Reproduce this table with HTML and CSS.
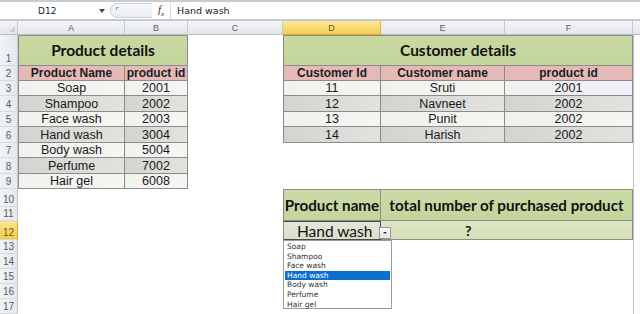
FILE: index.html
```html
<!DOCTYPE html>
<html>
<head>
<meta charset="utf-8">
<link rel="stylesheet" href="styles.css">
</head>
<body>
<div class="app">
  <div class="formula-bar">
    <div class="name-box"><span class="name">D12</span><span class="nb-arrow"></span></div>
    <div class="fb-tools"><span class="pill"><span class="pill-dot"></span></span><span class="fx">f<sub>x</sub></span></div>
    <div class="fb-input">Hand wash</div>
  </div>
  <div class="sheet">
    <div class="corner r0 c0"><span class="corner-tri"></span></div>
    <div class="chd r0 ca">A</div>
    <div class="chd r0 cb">B</div>
    <div class="chd r0 cc">C</div>
    <div class="chd chd-active r0 cd">D</div>
    <div class="chd r0 ce">E</div>
    <div class="chd r0 cf">F</div>
    <div class="chd chd-end r0 cg"></div>

    <div class="rh r1 c0">1</div>
    <div class="rh r2 c0">2</div>
    <div class="rh r3 c0">3</div>
    <div class="rh r4 c0">4</div>
    <div class="rh r5 c0">5</div>
    <div class="rh r6 c0">6</div>
    <div class="rh r7 c0">7</div>
    <div class="rh r8 c0">8</div>
    <div class="rh r9 c0">9</div>
    <div class="rh r10 c0">10</div>
    <div class="rh r11 c0">11</div>
    <div class="rh rh-active r12 c0">12</div>
    <div class="rh r13 c0">13</div>
    <div class="rh r14 c0">14</div>
    <div class="rh r15 c0">15</div>
    <div class="rh r16 c0">16</div>
    <div class="rh r17 c0">17</div>

    <div class="vline r1 cg"></div>

    <!-- Product details -->
    <div class="cell title top left r1 ca-b">Product details</div>
    <div class="cell head left r2 ca">Product Name</div>
    <div class="cell head r2 cb">product id</div>
    <div class="cell light left r3 ca">Soap</div><div class="cell light r3 cb">2001</div>
    <div class="cell dark left r4 ca">Shampoo</div><div class="cell dark r4 cb">2002</div>
    <div class="cell light left r5 ca">Face wash</div><div class="cell light r5 cb">2003</div>
    <div class="cell dark left r6 ca">Hand wash</div><div class="cell dark r6 cb">3004</div>
    <div class="cell light left r7 ca">Body wash</div><div class="cell light r7 cb">5004</div>
    <div class="cell dark left r8 ca">Perfume</div><div class="cell dark r8 cb">7002</div>
    <div class="cell light left r9 ca">Hair gel</div><div class="cell light r9 cb">6008</div>

    <!-- Customer details -->
    <div class="cell title top left r1 cd-f">Customer details</div>
    <div class="cell head left r2 cd">Customer Id</div>
    <div class="cell head r2 ce">Customer name</div>
    <div class="cell head r2 cf">product id</div>
    <div class="cell light left r3 cd">11</div><div class="cell light r3 ce">Sruti</div><div class="cell light lav r3 cf">2001</div>
    <div class="cell dark left r4 cd">12</div><div class="cell dark r4 ce">Navneet</div><div class="cell dark r4 cf">2002</div>
    <div class="cell light left r5 cd">13</div><div class="cell light r5 ce">Punit</div><div class="cell light r5 cf">2002</div>
    <div class="cell dark left r6 cd">14</div><div class="cell dark r6 ce">Harish</div><div class="cell dark r6 cf">2002</div>

    <!-- Lookup -->
    <div class="cell title2 top left r10-11 cd">Product name</div>
    <div class="cell title2 top r10-11 ce-f">total number of purchased product</div>
    <div class="cell sel left r12 cd">Hand wash</div>
    <div class="cell result r12 ce-f">?</div>

    <div class="dd-btn"><span class="dd-tri"></span></div>
    <ul class="dd-list">
      <li>Soap</li>
      <li>Shampoo</li>
      <li>Face wash</li>
      <li class="picked">Hand wash</li>
      <li>Body wash</li>
      <li>Perfume</li>
      <li>Hair gel</li>
    </ul>
  </div>
</div>
</body>
</html>
```
FILE: styles.css
```css
* { box-sizing: border-box; }
html, body { margin: 0; padding: 0; background: #fff; }
body { width: 640px; height: 314px; overflow: hidden; font-family: "Liberation Sans", Arial, sans-serif; }
.app { width: 640px; height: 314px; display: flex; flex-direction: column; }

/* formula bar */
.formula-bar {
  height: 21px; display: flex; align-items: stretch;
  border-top: 2px solid #c9cbce; border-bottom: 2px solid #c6c9cd;
  background: #fff;
}
.name-box { width: 108px; display: flex; align-items: center; position: relative; }
.name { margin-left: 38px; font-family: "DejaVu Sans", sans-serif; font-size: 9px; color: #222; }
.nb-arrow {
  position: absolute; left: 99px; top: 7px;
  border-left: 3px solid transparent; border-right: 3px solid transparent; border-top: 4px solid #444;
}
.fb-tools { width: 62px; display: flex; align-items: center; position: relative; }
.pill {
  width: 42px; height: 15px; margin-left: 2px; border: 1px solid #cfd3d8; border-right: none;
  border-radius: 8px 0 0 8px; background: linear-gradient(#f8f9fa, #e9ecef);
  display: flex; align-items: center;
}
.pill-dot { width: 3px; height: 3px; margin-left: 5px; margin-top: -4px; border-left: 1px solid #9aa; border-top: 1px solid #9aa; }
.fx { margin-left: 6px; font-family: "Liberation Serif", serif; font-style: italic; font-size: 11px; color: #333; }
.fx sub { font-size: 7px; }
.fb-input {
  flex: 1; border-left: 1px solid #d5d8dc; display: flex; align-items: center;
  padding-left: 6px; font-family: "DejaVu Sans", sans-serif; font-size: 9.5px; color: #222;
}

/* sheet grid */
.sheet {
  position: relative; flex: 1;
  display: grid;
  grid-template-columns: 18px 107px 63px 95px 98px 124px 128px 7px;
  grid-template-rows: 14px 31px 15px 15px 16px 15px 16px 15px 16px 15px 18px 14px 19px 14px 15px 15px 15px 15px;
}
.c0 { grid-column: 1; } .ca { grid-column: 2; } .cb { grid-column: 3; } .cc { grid-column: 4; }
.cd { grid-column: 5; } .ce { grid-column: 6; } .cf { grid-column: 7; } .cg { grid-column: 8; }
.ca-b { grid-column: 2 / 4; } .cd-f { grid-column: 5 / 8; } .ce-f { grid-column: 6 / 8; }
.r0 { grid-row: 1; } .r1 { grid-row: 2; } .r2 { grid-row: 3; } .r3 { grid-row: 4; } .r4 { grid-row: 5; }
.r5 { grid-row: 6; } .r6 { grid-row: 7; } .r7 { grid-row: 8; } .r8 { grid-row: 9; } .r9 { grid-row: 10; }
.r10 { grid-row: 11; } .r11 { grid-row: 12; } .r12 { grid-row: 13; } .r13 { grid-row: 14; } .r14 { grid-row: 15; }
.r15 { grid-row: 16; } .r16 { grid-row: 17; } .r17 { grid-row: 18; }
.r10-11 { grid-row: 11 / 13; }

.corner {
  background: linear-gradient(#f3f4f6, #e3e6ea); border-right: 1px solid #c5cad0; border-bottom: 1px solid #b9bfc6;
  position: relative;
}
.corner-tri {
  position: absolute; right: 2px; bottom: 2px; width: 0; height: 0;
  border-left: 6px solid transparent; border-bottom: 6px solid #c9ced4;
}
.chd {
  background: linear-gradient(#f4f5f7, #e3e6e9);
  border-right: 1px solid #c6cbd1; border-bottom: 1px solid #b9bfc6;
  display: flex; align-items: center; justify-content: center;
  font-size: 9px; color: #5a5d61; padding-top: 1px;
}
.chd-active { background: linear-gradient(#fbe89a, #f4cf4e); border-right-color: #e2b73a; border-bottom-color: #d9a92d; color: #6b5a1c; }
.chd-end { border-right: none; }
.rh {
  background: linear-gradient(to right, #f1f3f5, #e6e9ec);
  border-right: 1px solid #c2c8ce; border-bottom: 1px solid #d6dadf;
  display: flex; align-items: flex-end; justify-content: center; padding-bottom: 1px;
  font-size: 10px; color: #5a5d61;
}
.rh-active { background: linear-gradient(#fbe494, #f4cc48); border-right-color: #d9a92d; color: #7a5a10; }
.vline { grid-row: 2 / 19; border-left: 1px solid #c0c4c8; }

/* cells */
.cell {
  display: flex; align-items: center; justify-content: center;
  border-right: 1px solid #8c8c8c; border-bottom: 1px solid #8c8c8c;
  font-size: 12.5px; color: #1a1a1a; white-space: nowrap; overflow: hidden;
}
.cell.left { border-left: 1px solid #8c8c8c; }
.cell.top { border-top: 1px solid #8c8c8c; }
.title {
  background: linear-gradient(#c9d9a3, #c3d59b);
  font-family: Lato, "Open Sans", sans-serif; font-weight: 700; font-size: 15.5px; color: #111;
  padding-bottom: 1px;
}
.head { background: #e5b9b7; font-weight: 700; font-size: 12px; color: #1e1e1e; }
.light { background: linear-gradient(to right, #f1f1ee, #f5f5f2); }
.dark { background: linear-gradient(to right, #d3d4d0, #e2e2de); }
.lav { background: linear-gradient(to right, #f1f1ee, #eeeef8); }
.title2 {
  background: linear-gradient(#cbdaa7, #c3d59b);
  font-family: Lato, "Open Sans", sans-serif; font-weight: 700; font-size: 15.2px; color: #111;
}
.sel {
  background: linear-gradient(#e4e7d8, #dadfcb);
  border: 1px solid #4a4a4a; font-family: Lato, "Open Sans", sans-serif; font-size: 15.5px; color: #111;
  justify-content: flex-start; padding-left: 13px;
}
.result {
  background: linear-gradient(#dde6c3, #d5e0b6);
  font-family: Lato, "Open Sans", sans-serif; font-weight: 700; font-size: 14px; color: #111;
  justify-content: flex-start; padding-left: 84px;
}

/* dropdown overlay */
.dd-btn {
  position: absolute; left: 379px; top: 206px; width: 12px; height: 12px;
  background: linear-gradient(#fbfbfb, #e4e4e4); border: 1px solid #9a9a9a;
  display: flex; align-items: center; justify-content: center;
}
.dd-tri { width: 0; height: 0; border-left: 2px solid transparent; border-right: 2px solid transparent; border-top: 2px solid #333; }
.dd-list {
  position: absolute; left: 283px; top: 219px; width: 109px; height: 69px;
  margin: 0; padding: 1px 1px 0 1px; list-style: none;
  background: #fff; border: 1px solid #9b9b9b;
  font-family: "DejaVu Sans", sans-serif; font-size: 7.5px; color: #333;
}
.dd-list li { height: 9.6px; line-height: 9.6px; padding-left: 2px; }
.dd-list li.picked { background: #0a6fd1; color: #fff; }
```
